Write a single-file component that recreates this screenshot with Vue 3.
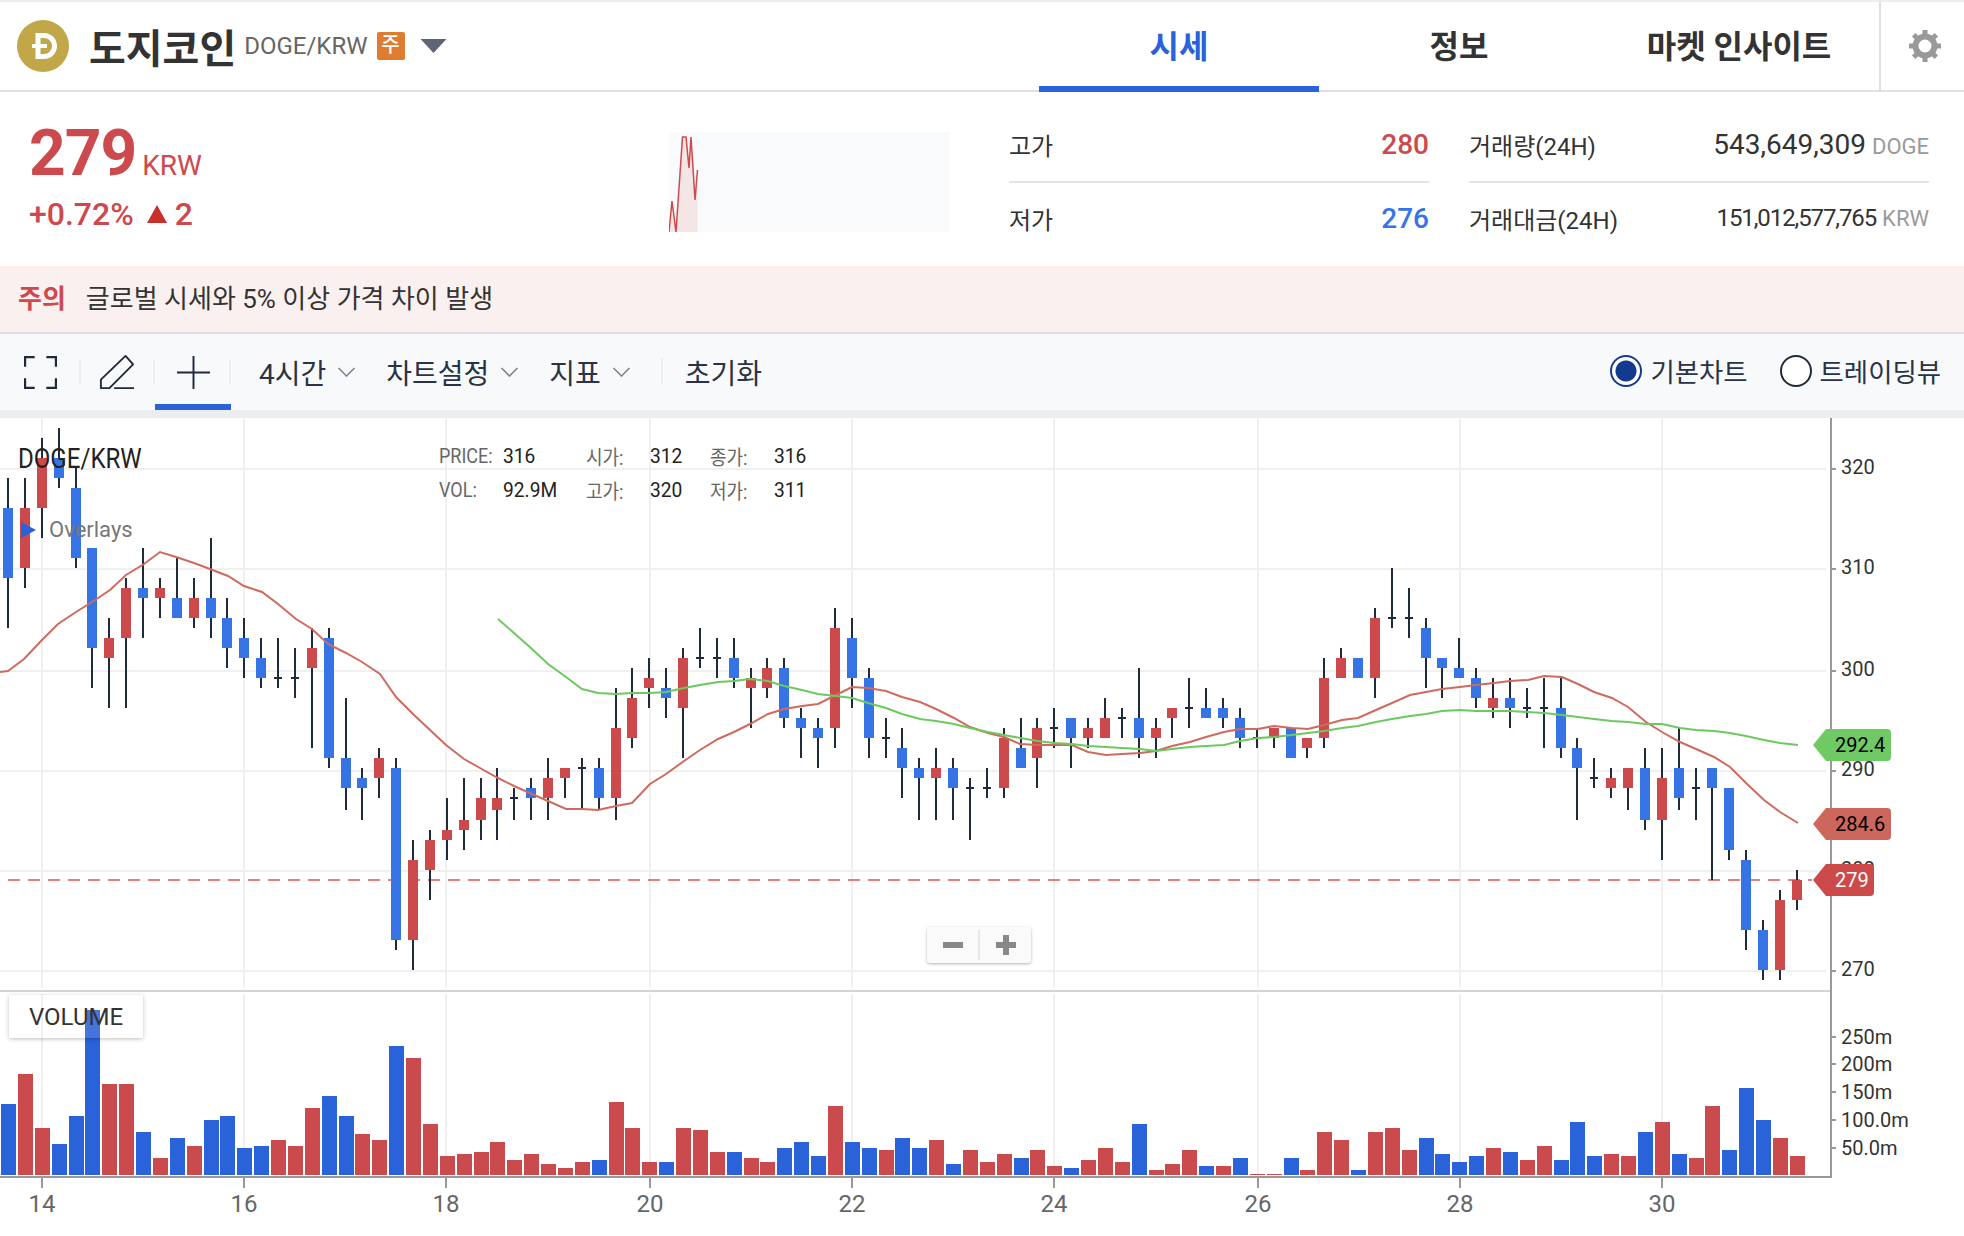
<script setup>
const xOf = (i) => Math.round(8 + 16.875 * i)
const yOf = (p) => Math.round((969.5 - 10.03 * (p - 270)) / 2) * 2

// [type, body high, body low, wick high, wick low]
const rawCandles = [
  ['b',316,309,319,304],['r',316,310,319,308],['r',321,316,323,313],['b',321,319,324,318],
  ['b',318,311,320,310],['b',312,302,312,298],['r',303,301,305,296],['r',308,303,309,296],
  ['b',308,307,312,303],['r',308,307,309,305],['b',307,305,311,305],['r',307,305,309,304],
  ['b',307,305,313,303],['b',305,302,307,300],['b',303,301,305,299],['b',301,299,303,298],
  ['d',299,299,303,298],['d',299,299,302,297],['r',302,300,304,292],['b',303,291,304,290],
  ['b',291,288,297,286],['b',289,288,290,285],['r',291,289,292,287],['b',290,273,291,272],
  ['r',281,273,283,270],['r',283,280,284,277],['r',284,283,287,281],['r',285,284,289,282],
  ['r',287,285,289,283],['r',287,286,290,283],['d',287,287,288,285],['b',288,287,289,285],
  ['r',289,287,291,285],['r',290,289,290,287],['d',290,290,291,286],['b',290,287,291,286],
  ['r',294,287,298,285],['r',297,293,300,292],['r',299,298,301,296],['b',298,297,300,295],
  ['r',301,296,302,291],['d',301,301,304,300],['d',301,301,303,299],['b',301,299,303,298],
  ['r',299,298,300,294],['r',300,298,301,297],['b',300,295,301,294],['b',295,294,296,291],
  ['b',294,293,295,290],['r',304,294,306,292],['b',303,299,305,296],['b',299,293,300,291],
  ['d',293,293,295,291],['b',292,290,294,287],['b',290,289,291,285],['r',290,289,292,285],
  ['b',290,288,291,285],['d',288,288,289,283],['d',288,288,290,287],['r',293,288,294,287],
  ['b',292,290,295,290],['r',294,291,295,288],['d',294,294,296,292],['b',295,293,295,290],
  ['r',294,293,295,292],['r',295,293,297,293],['d',295,295,296,293],['b',295,293,300,291],
  ['r',294,293,295,291],['r',296,295,296,293],['d',296,296,299,294],['b',296,295,298,295],
  ['b',296,295,297,294],['b',295,293,296,292],['d',293,293,294,292],['r',294,293,294,292],
  ['b',294,291,294,291],['r',293,292,293,291],['r',299,293,301,292],['r',301,299,302,299],
  ['b',301,299,301,299],['r',305,299,306,297],['d',305,305,310,304],['d',305,305,308,303],
  ['b',304,301,305,298],['b',301,300,301,297],['b',300,299,303,299],['b',299,297,300,296],
  ['r',297,296,299,295],['b',297,296,299,294],['d',296,296,298,295],['d',296,296,299,292],
  ['b',296,292,299,291],['b',292,290,293,285],['d',289,289,291,288],['r',289,288,290,287],
  ['r',290,288,290,286],['b',290,285,292,284],['r',289,285,292,281],['b',290,287,294,286],
  ['d',288,288,290,285],['b',290,288,290,279],['b',288,282,288,281],['b',281,274,282,272],
  ['b',274,270,275,269],['r',277,270,278,269],['r',279,277,280,276]
]
const candles = rawCandles.map(([type, top, bot, hi, lo], i) => ({
  type,
  x: xOf(i),
  top: yOf(top),
  h: yOf(bot) - yOf(top),
  hi: yOf(hi),
  lo: yOf(lo)
}))

const volHeights = [
  71,101,47,31,59,165,91,91,43,17,37,29,55,59,27,29,35,29,67,79,59,41,35,129,117,51,19,21,23,33,15,21,11,7,13,15,
  73,47,13,13,47,45,23,23,17,13,27,33,19,69,33,27,25,37,27,35,11,25,13,21,17,25,9,7,15,27,13,51,5,11,25,9,9,17,1,1,
  17,5,43,35,5,43,47,25,37,21,13,19,27,23,15,29,15,53,19,21,19,43,53,21,17,69,25,87,55,37,19
]
const volBlue = new Set([0,3,4,5,8,10,12,13,14,15,19,20,23,35,39,43,46,47,48,50,51,53,54,56,60,63,67,71,73,76,80,84,85,86,87,89,92,93,94,97,99,102,103,104])
const volumes = volHeights.map((h, i) => ({ x: xOf(i) - 7, h, blue: volBlue.has(i) }))

const redLine = '0,672 8,671 24,659 42,640 58,624 76,612 92,602 110,590 126,575 144,564 160,552 176,557 194,563 210,569 228,576 244,586 262,592 278,604 296,619 312,629 328,644 346,653 362,662 380,674 396,697 414,715 430,730 446,745 464,759 480,768 498,778 514,786 532,794 548,801 566,809 582,809 598,810 616,806 632,803 650,784 666,774 684,761 700,750 718,739 734,732 750,724 768,714 784,709 802,706 818,704 836,695 852,687 868,688 886,691 902,697 920,702 936,709 954,718 970,727 988,733 1004,737 1020,744 1038,745 1054,745 1072,745 1088,752 1106,755 1122,754 1140,753 1156,751 1172,746 1190,742 1206,737 1224,732 1240,729 1258,729 1274,726 1292,728 1308,729 1324,725 1342,720 1358,718 1376,710 1392,703 1410,695 1426,692 1442,689 1460,687 1476,685 1494,683 1510,681 1528,680 1544,676 1562,677 1578,684 1594,692 1612,698 1628,707 1646,722 1662,732 1680,742 1696,749 1714,757 1730,767 1746,783 1764,800 1780,812 1798,823'
const greenLine = '498,619 514,633 532,649 548,664 566,677 582,689 598,693 616,694 632,693 650,693 666,692 684,688 700,685 718,682 734,681 750,679 768,681 784,686 802,690 818,694 836,696 852,698 868,703 886,708 902,714 920,719 936,721 954,724 970,728 988,732 1004,735 1020,738 1038,741 1054,743 1072,744 1088,746 1106,747 1122,748 1140,749 1156,751 1172,749 1190,747 1206,746 1224,745 1240,741 1258,738 1274,737 1292,735 1308,733 1324,731 1342,728 1358,726 1376,722 1392,719 1410,716 1426,714 1442,711 1460,710 1476,711 1494,711 1510,711 1528,712 1544,713 1562,715 1578,717 1594,719 1612,721 1628,722 1646,724 1662,724 1680,728 1696,730 1714,731 1730,733 1746,736 1764,740 1780,743 1798,745'

const gridX = [
  { x: 42, label: '14' }, { x: 244, label: '16' }, { x: 446, label: '18' }, { x: 650, label: '20' },
  { x: 852, label: '22' }, { x: 1054, label: '24' }, { x: 1258, label: '26' }, { x: 1460, label: '28' },
  { x: 1662, label: '30' }
]
const gridY = [
  { y: 469, label: '320' }, { y: 569, label: '310' }, { y: 671, label: '300' },
  { y: 771, label: '290' }, { y: 871, label: '280' }, { y: 971, label: '270' }
]
const volTicks = [
  { y: 1037, label: '250m' }, { y: 1064, label: '200m' }, { y: 1092, label: '150m' },
  { y: 1120, label: '100.0m' }, { y: 1148, label: '50.0m' }
]
const gearTeeth = [0, 45, 90, 135, 180, 225, 270, 315]
const tabs = ['시세', '정보', '마켓 인사이트']
const menus = ['4시간', '차트설정', '지표']
</script>

<template>
  <div class="page">
    <header class="top">
      <div class="coin">
        <svg class="coin-logo" viewBox="0 0 52 52">
          <circle cx="26" cy="26" r="26" fill="#c2a748" />
          <path d="M21 15.5h6a10.5 10.5 0 0 1 0 21h-6z" fill="none" stroke="#fff" stroke-width="5" />
          <path d="M15 26h15" stroke="#fff" stroke-width="4" />
        </svg>
        <h1 class="coin-name">도지코인</h1>
        <span class="coin-pair">DOGE/KRW</span>
        <span class="coin-badge">주</span>
        <svg class="coin-caret" viewBox="0 0 26 14"><path d="M0 0h26L13 14z" fill="#5f6577" /></svg>
      </div>
      <nav class="tabs">
        <div v-for="(t, i) in tabs" :key="t" class="tab" :class="{ active: i === 0 }">{{ t }}</div>
      </nav>
      <div class="settings">
        <svg class="gear" viewBox="0 0 32 32">
          <circle cx="16" cy="16" r="9.5" fill="none" stroke="#999" stroke-width="6" />
          <rect
            v-for="a in gearTeeth"
            :key="a"
            x="13.5"
            y="0"
            width="5"
            height="6"
            fill="#999"
            :transform="`rotate(${a} 16 16)`"
          />
        </svg>
      </div>
    </header>

    <section class="summary">
      <div class="price-block">
        <div class="price-main">279<span class="price-unit">KRW</span></div>
        <div class="price-change">
          +0.72%
          <svg class="up" viewBox="0 0 20 18"><path d="M10 0l10 18H0z" fill="#c8302a" /></svg>
          2
        </div>
      </div>
      <svg class="spark" viewBox="0 0 280 100">
        <rect width="280" height="100" fill="#f9fafc" />
        <path d="M0 100L3 69 7 100 13.5 5 17 5 20 36 22 5 26 68 28.5 38V100z" fill="#f5e6e6" />
        <polyline points="0,100 3,69 7,100 13.5,5 17,5 20,36 22,5 26,68 28.5,38" fill="none" stroke="#cf4a4e" stroke-width="1.5" />
      </svg>
      <div class="stats">
        <div class="stat-col high-low">
          <div class="stat-row"><span>고가</span><b class="red">280</b></div>
          <div class="stat-row"><span>저가</span><b class="blue">276</b></div>
        </div>
        <div class="stat-col volume-col">
          <div class="stat-row"><span>거래량(24H)</span><span class="stat-val big">543,649,309<small>DOGE</small></span></div>
          <div class="stat-row"><span>거래대금(24H)</span><span class="stat-val tight">151,012,577,765<small>KRW</small></span></div>
        </div>
      </div>
    </section>

    <div class="notice"><b>주의</b><span>글로벌 시세와 5% 이상 가격 차이 발생</span></div>

    <div class="toolbar">
      <div class="tool-cell first">
        <svg viewBox="0 0 34 34" class="tool-icon">
          <path d="M1 11V1h10M23 1h10v10M33 23v10H23M11 33H1V23" fill="none" stroke="#1f2a3c" stroke-width="2.5" />
        </svg>
      </div>
      <div class="tool-cell">
        <svg viewBox="0 0 38 38" class="tool-icon pencil">
          <path d="M2 27v9h9L36 11 28 2z M16 36h21" fill="none" stroke="#1f2a3c" stroke-width="2" stroke-linejoin="round" />
        </svg>
      </div>
      <div class="tool-cell active">
        <svg viewBox="0 0 34 34" class="tool-icon">
          <path d="M17 0v34M0 17h34" stroke="#1f2a3c" stroke-width="2" />
        </svg>
      </div>
      <div v-for="m in menus" :key="m" class="menu">
        {{ m }}
        <svg class="chev" viewBox="0 0 18 10"><path d="M1 1l8 8 8-8" fill="none" stroke="#7c8494" stroke-width="1.6" /></svg>
      </div>
      <div class="reset">초기화</div>
      <div class="radios">
        <label class="radio"><i class="dot on"></i>기본차트</label>
        <label class="radio"><i class="dot"></i>트레이딩뷰</label>
      </div>
    </div>
    <div class="band"></div>

    <div class="chart">
      <svg class="chart-svg" viewBox="0 418 1964 818" width="1964" height="818">
        <g fill="#f0f0f0">
          <rect v-for="g in gridY" :key="g.y" x="0" :y="g.y - 1" width="1826" height="2" />
          <template v-for="g in gridX" :key="g.x">
            <rect :x="g.x - 1" y="418" width="2" height="570" />
            <rect :x="g.x - 1" y="994" width="2" height="182" />
          </template>
        </g>
        <line x1="8" y1="880" x2="1812" y2="880" stroke="#e08080" stroke-width="2" stroke-dasharray="12 8" />

        <g v-for="(c, i) in candles" :key="i">
          <rect :x="c.x - 1" :y="c.hi" width="2" :height="c.lo - c.hi" fill="#1f2a3c" />
          <rect v-if="c.type === 'd'" :x="c.x - 4" :y="c.top - 1" width="8" height="2" fill="#1f2a3c" />
          <rect v-else :x="c.x - 5" :y="c.top" width="10" :height="c.h" :fill="c.type === 'b' ? '#3674e5' : '#cc4a4b'" />
        </g>

        <polyline :points="redLine" fill="none" stroke="#cf6a5e" stroke-width="2" />
        <polyline :points="greenLine" fill="none" stroke="#6cc95f" stroke-width="2" />

        <rect x="0" y="990" width="1830" height="2" fill="#d4d4d4" />
        <rect
          v-for="(v, i) in volumes"
          :key="'v' + i"
          :x="v.x"
          :y="1175 - v.h"
          width="15"
          :height="v.h"
          :fill="v.blue ? '#2962d9' : '#cb4a4d'"
        />

        <rect x="1830" y="418" width="2" height="760" fill="#999" />
        <rect x="0" y="1176" width="1832" height="2" fill="#999" />
        <g v-for="g in gridX" :key="'tx' + g.x">
          <rect :x="g.x - 1" y="1177" width="2" height="11" fill="#999" />
          <text class="x-label" :x="g.x" y="1212">{{ g.label }}</text>
        </g>
        <g v-for="g in gridY" :key="'ty' + g.y">
          <rect x="1830" :y="g.y - 1" width="6" height="2" fill="#999" />
          <text class="y-label" x="1841" :y="g.y + 5">{{ g.label }}</text>
        </g>
        <g v-for="t in volTicks" :key="t.y">
          <rect x="1830" :y="t.y - 1" width="6" height="2" fill="#999" />
          <text class="y-label" x="1841" :y="t.y + 7">{{ t.label }}</text>
        </g>

        <g class="tag">
          <path d="M1813 745L1826 729H1887a4 4 0 0 1 4 4V757a4 4 0 0 1-4 4H1826z" fill="#6fc965" />
          <text x="1835" y="752">292.4</text>
          <path d="M1813 824L1826 808H1887a4 4 0 0 1 4 4V836a4 4 0 0 1-4 4H1826z" fill="#cd665c" />
          <text x="1835" y="831">284.6</text>
          <path d="M1813 880L1826 864H1870a4 4 0 0 1 4 4V892a4 4 0 0 1-4 4H1826z" fill="#cd4a4b" />
          <text x="1835" y="887" fill="#fff">279</text>
        </g>
      </svg>

      <div class="pair-title">DOGE/KRW</div>
      <div class="legend">
        <span class="k">PRICE:</span><span class="v">316</span>
        <span class="k">시가:</span><span class="v">312</span>
        <span class="k">종가:</span><span class="v">316</span>
        <span class="k">VOL:</span><span class="v">92.9M</span>
        <span class="k">고가:</span><span class="v">320</span>
        <span class="k">저가:</span><span class="v">311</span>
      </div>
      <div class="overlays"><i class="ov-arrow"></i>Overlays</div>
      <div class="zoom-box"><span class="minus"></span><span class="plus"></span></div>
      <div class="vol-box">VOLUME</div>
    </div>
  </div>
</template>

<style>
html, body {
  background: #fff;
}
</style>

<style scoped>
.page {
  width: 1964px;
  height: 1236px;
  overflow: hidden;
  border-top: 2px solid #ecedf0;
  box-sizing: border-box;
  font-family: Roboto, "Noto Sans CJK KR", sans-serif;
  color: #333;
}
.top {
  display: flex;
  height: 88px;
  border-bottom: 2px solid #dfe0e3;
}
.coin {
  flex: 1;
  display: flex;
  align-items: center;
  padding-left: 17px;
}
.coin-logo {
  width: 52px;
  height: 52px;
  margin-right: 20px;
}
.coin-name {
  margin: 0;
  font-size: 40px;
  font-weight: 700;
  color: #333;
}
.coin-pair {
  margin-left: 8px;
  font-size: 24px;
  color: #666;
}
.coin-badge {
  width: 28px;
  height: 28px;
  margin-left: 9px;
  border-radius: 2px;
  background: #de7c2f;
  color: #fff;
  font-size: 20px;
  font-weight: 500;
  line-height: 27px;
  text-align: center;
}
.coin-caret {
  width: 27px;
  height: 14px;
  margin-left: 15px;
}
.tabs {
  display: flex;
}
.tab {
  width: 280px;
  height: 90px;
  box-sizing: border-box;
  font-size: 32px;
  font-weight: 700;
  line-height: 90px;
  text-align: center;
  color: #333;
}
.tab.active {
  color: #2962d9;
  border-bottom: 6px solid #2962d9;
}
.settings {
  width: 83px;
  border-left: 2px solid #dfe0e3;
  display: flex;
  align-items: center;
  justify-content: center;
}
.gear {
  width: 32px;
  height: 32px;
  margin-left: 4px;
}
.summary {
  display: flex;
  height: 174px;
  padding-left: 29px;
}
.price-block {
  width: 640px;
  padding-top: 30px;
  color: #cc4a4d;
}
.price-main {
  font-size: 64px;
  font-weight: 700;
  line-height: 64px;
  letter-spacing: -1px;
}
.price-unit {
  margin-left: 6px;
  font-size: 28px;
  font-weight: 400;
  letter-spacing: 0;
}
.price-change {
  display: flex;
  align-items: center;
  gap: 8px;
  margin-top: -2px;
  font-size: 32px;
  font-weight: 500;
  line-height: 36px;
}
.up {
  width: 20px;
  height: 18px;
  margin-left: 5px;
}
.spark {
  width: 280px;
  height: 100px;
  margin-top: 40px;
}
.stats {
  display: flex;
  gap: 40px;
  margin-left: 60px;
  padding-top: 22px;
}
.stat-col {
  display: flex;
  flex-direction: column;
}
.high-low {
  width: 420px;
}
.volume-col {
  width: 460px;
}
.stat-row {
  display: flex;
  align-items: center;
  justify-content: space-between;
  height: 69px;
  box-sizing: border-box;
  font-size: 24px;
}
.stat-row:first-child {
  border-bottom: 2px solid #e3e4e8;
  padding-bottom: 7px;
}
.stat-row:last-child {
  height: 71px;
  padding-bottom: 1px;
}
.stat-row b {
  font-size: 28px;
  font-weight: 500;
}
.red {
  color: #cc4a4d;
}
.blue {
  color: #3674e5;
}
.stat-val.big {
  font-size: 28px;
}
.stat-val.tight {
  font-size: 24px;
  letter-spacing: -1.1px;
}
.stat-val small {
  margin-left: 6px;
  font-size: 22px;
  letter-spacing: 0;
  color: #9a9a9a;
}
.notice {
  display: flex;
  align-items: center;
  gap: 20px;
  height: 66px;
  box-sizing: content-box;
  padding-left: 18px;
  background: #faf0f0;
  border-bottom: 2px solid #e0e0e2;
  font-size: 26px;
  color: #333;
}
.notice b,
.notice span {
  position: relative;
  top: -3px;
}
.notice b {
  font-weight: 700;
  color: #cc4a4d;
}
.toolbar {
  display: flex;
  align-items: center;
  height: 76px;
  background: #f8f9fb;
  font-size: 28px;
  color: #2a3345;
}
.tool-cell {
  position: relative;
  display: flex;
  align-items: center;
  justify-content: center;
  width: 74px;
  height: 76px;
  box-sizing: border-box;
}
.tool-cell.first {
  width: 81px;
}
.tool-cell.first::after,
.tool-cell:nth-child(2)::after,
.tool-cell.active::after {
  content: "";
  position: absolute;
  right: 0;
  top: 26px;
  width: 2px;
  height: 24px;
  background: #eceef0;
}
.tool-cell.active {
  width: 76px;
  border-bottom: 6px solid #2962d9;
  padding-top: 6px;
}
.tool-icon {
  width: 33px;
  height: 33px;
}
.tool-icon.pencil {
  width: 36px;
  height: 36px;
  margin-right: 3px;
}
.menu {
  display: flex;
  align-items: center;
  gap: 11px;
  margin-left: 30px;
}
.menu:nth-child(4) {
  margin-left: 28px;
}
.chev {
  width: 19px;
  height: 10px;
}
.reset {
  position: relative;
  margin-left: 54px;
}
.reset::before {
  content: "";
  position: absolute;
  left: -24px;
  top: 6px;
  width: 2px;
  height: 26px;
  background: #eceef0;
}
.radios {
  display: flex;
  gap: 32px;
  margin-left: auto;
  margin-bottom: 3px;
  padding-right: 23px;
  font-size: 26.4px;
}
.radio {
  display: flex;
  align-items: center;
  gap: 8px;
}
.dot {
  width: 32px;
  height: 32px;
  box-sizing: border-box;
  border: 2px solid #1f2a3c;
  border-radius: 50%;
  background: #fff;
}
.dot.on {
  border-color: #143a8f;
  background: radial-gradient(circle, #143a8f 0 10px, #fff 11px);
}
.band {
  height: 8px;
  background: #ecedf0;
}
.chart {
  position: relative;
  height: 818px;
}
.chart-svg {
  display: block;
}
.x-label {
  font-size: 24px;
  fill: #666;
  text-anchor: middle;
}
.y-label {
  font-size: 20px;
  fill: #333;
}
.tag text {
  font-size: 20px;
}
.pair-title {
  position: absolute;
  left: 18px;
  top: 24px;
  font-size: 28px;
  line-height: 34px;
  color: #222;
  transform: scaleX(0.86);
  transform-origin: left;
}
.legend {
  position: absolute;
  left: 439px;
  top: 21px;
  display: grid;
  grid-template-columns: 64px 83px 64px 60px 64px 40px;
  grid-auto-rows: 34px;
  align-items: center;
  font-size: 20px;
}
.k,
.v {
  transform-origin: left;
}
.k {
  color: #666;
  transform: scaleX(0.9);
}
.v {
  color: #222;
  transform: scaleX(0.96);
}
.overlays {
  position: absolute;
  left: 21px;
  top: 98px;
  display: flex;
  align-items: center;
  gap: 13px;
  font-size: 22px;
  line-height: 28px;
  color: #777;
}
.ov-arrow {
  width: 0;
  height: 0;
  border-left: 15px solid #2962d9;
  border-top: 8px solid transparent;
  border-bottom: 8px solid transparent;
}
.zoom-box {
  position: absolute;
  left: 927px;
  top: 509px;
  display: flex;
  width: 104px;
  height: 36px;
  border-radius: 3px;
  background: #fafafa;
  box-shadow: 0 1px 3px rgba(0, 0, 0, 0.3);
}
.minus,
.plus {
  position: relative;
  flex: 1;
}
.minus {
  border-right: 2px solid #e6e6e6;
  margin: 3px 0;
}
.minus::before,
.plus::before,
.plus::after {
  content: "";
  position: absolute;
  background: #888;
}
.minus::before {
  left: 16px;
  top: 12px;
  width: 20px;
  height: 6px;
}
.plus::before {
  left: 16px;
  top: 15px;
  width: 20px;
  height: 6px;
}
.plus::after {
  left: 23px;
  top: 8px;
  width: 6px;
  height: 20px;
}
.vol-box {
  position: absolute;
  left: 9px;
  top: 577px;
  width: 134px;
  height: 43px;
  box-sizing: border-box;
  background: rgba(255, 255, 255, 0.12);
  box-shadow: 0 1px 4px rgba(0, 0, 0, 0.25);
  font-size: 24px;
  line-height: 45px;
  text-align: center;
  color: #333;
}
</style>
